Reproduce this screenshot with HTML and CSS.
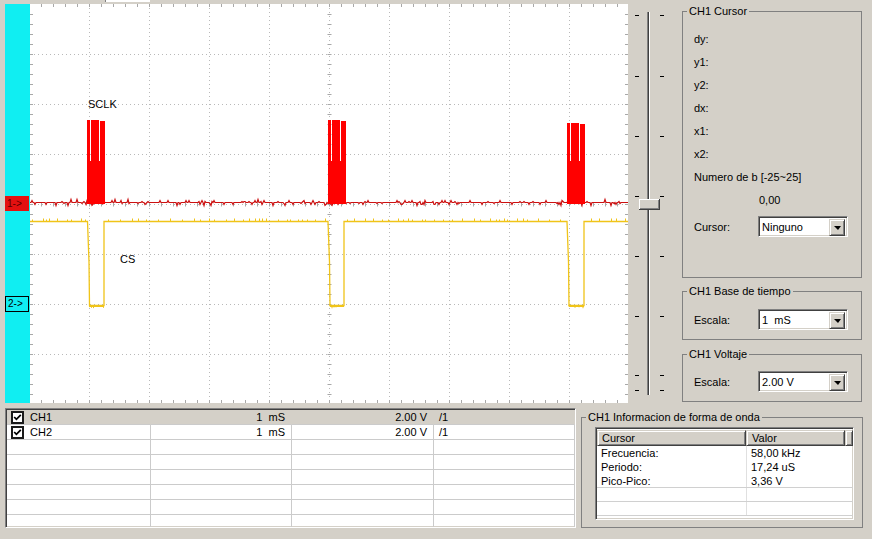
FILE: index.html
```html
<!DOCTYPE html>
<html lang="es">
<head>
    <meta charset="UTF-8">
    <title>Osciloscopio</title>
    <link rel="stylesheet" href="styles.css">
</head>
<body>

<div class="main">
    <div class="scope-col">
        <div class="top-strip"><div class="top-ctl"></div></div>
        <div class="scope">
            <div class="ch-bar">
                <div class="marker m1">1-&gt;</div>
                <div class="marker m2">2-&gt;</div>
            </div>
            <svg id="plot" class="plot" width="598" height="399" viewBox="0 0 598 399"></svg>
        </div>
    </div>

    <!-- trackbar -->
    <svg id="slider" class="slider" width="54" height="403" viewBox="0 0 54 403"></svg>

    <div class="side">
        <fieldset class="group cursor-group">
            <legend>CH1 Cursor</legend>
            <div class="group-body">
                <div class="row">dy:</div>
                <div class="row">y1:</div>
                <div class="row">y2:</div>
                <div class="row">dx:</div>
                <div class="row">x1:</div>
                <div class="row">x2:</div>
                <div class="row">Numero de b [-25~25]</div>
                <div class="row value">0,00</div>
                <div class="field">
                    <span class="label">Cursor:</span>
                    <div class="combo"><span class="combo-text">Ninguno</span><span class="combo-btn"></span></div>
                </div>
            </div>
        </fieldset>

        <fieldset class="group small-group time-group">
            <legend>CH1 Base de tiempo</legend>
            <div class="field">
                <span class="label">Escala:</span>
                <div class="combo"><span class="combo-text">1&nbsp; mS</span><span class="combo-btn"></span></div>
            </div>
        </fieldset>

        <fieldset class="group small-group volt-group">
            <legend>CH1 Voltaje</legend>
            <div class="field">
                <span class="label">Escala:</span>
                <div class="combo"><span class="combo-text">2.00 V</span><span class="combo-btn"></span></div>
            </div>
        </fieldset>
    </div>
</div>

<div class="bottom">
    <div class="chan-list">
        <div class="chan-row sel">
            <div class="cell c-ch"><span class="check"><svg width="9" height="9" viewBox="0 0 9 9"><polyline points="1.2,4 3.4,6.3 7.8,1.8" fill="none" stroke="#000" stroke-width="1.8"/></svg></span>CH1</div>
            <div class="cell num">1  mS</div>
            <div class="cell num">2.00 V</div>
            <div class="cell">/1</div>
        </div>
        <div class="chan-row">
            <div class="cell c-ch"><span class="check"><svg width="9" height="9" viewBox="0 0 9 9"><polyline points="1.2,4 3.4,6.3 7.8,1.8" fill="none" stroke="#000" stroke-width="1.8"/></svg></span>CH2</div>
            <div class="cell num">1  mS</div>
            <div class="cell num">2.00 V</div>
            <div class="cell">/1</div>
        </div>
        <div class="chan-row"><div class="cell c-ch"></div><div class="cell"></div><div class="cell"></div><div class="cell"></div></div>
        <div class="chan-row"><div class="cell c-ch"></div><div class="cell"></div><div class="cell"></div><div class="cell"></div></div>
        <div class="chan-row"><div class="cell c-ch"></div><div class="cell"></div><div class="cell"></div><div class="cell"></div></div>
        <div class="chan-row"><div class="cell c-ch"></div><div class="cell"></div><div class="cell"></div><div class="cell"></div></div>
        <div class="chan-row"><div class="cell c-ch"></div><div class="cell"></div><div class="cell"></div><div class="cell"></div></div>
        <div class="chan-row"><div class="cell c-ch"></div><div class="cell"></div><div class="cell"></div><div class="cell"></div></div>
    </div>

    <fieldset class="group info-group">
        <legend>CH1 Informacion de forma de onda</legend>
        <div class="wave-list">
            <div class="lv-head">
                <div class="hd c-name">Cursor</div>
                <div class="hd c-val">Valor</div>
                <div class="hd c-fill"></div>
            </div>
            <div class="lv-row"><div class="c-name">Frecuencia:</div><div class="c-val">58,00 kHz</div></div>
            <div class="lv-row"><div class="c-name">Periodo:</div><div class="c-val">17,24 uS</div></div>
            <div class="lv-row line"><div class="c-name">Pico-Pico:</div><div class="c-val">3,36 V</div></div>
            <div class="lv-row line"><div class="c-name"></div><div class="c-val"></div></div>
            <div class="lv-row line"><div class="c-name"></div><div class="c-val"></div></div>
        </div>
    </fieldset>
</div>

<script>
    // Simple seeded random so the noise is the same every time
    let seed = 12345;
    function rnd() {
        seed = (seed * 16807) % 2147483647;
        return seed / 2147483647;
    }

    const NS = 'http://www.w3.org/2000/svg';

    function add(svg, tag, attrs) {
        const el = document.createElementNS(NS, tag);
        for (const k in attrs) el.setAttribute(k, attrs[k]);
        svg.appendChild(el);
        return el;
    }

    // ---- plot ----
    const plot = document.getElementById('plot');
    const W = 598, H = 399;

    add(plot, 'rect', { width: W, height: H, fill: '#fff' });

    // dotted grid
    let grid = '';
    for (let i = 0; i < 9; i++) grid += `M${59.5 + i * 60} 0V${H}`;
    for (let i = 0; i < 7; i++) grid += `M0 ${50.5 + i * 50}H${W}`;
    add(plot, 'path', { d: grid, stroke: '#b9b9b9', 'stroke-dasharray': '1 3', fill: 'none' });

    // ticks on the edges and the centre axes
    let ticks = '';
    for (let x = 12; x < W; x += 12) {
        ticks += `M${x - 0.5} 0v3M${x - 0.5} ${H - 3}v3M${x - 0.5} 198.5v4`;
    }
    for (let y = 10; y < H; y += 10) {
        ticks += `M0 ${y + 0.5}h3M${W - 3} ${y + 0.5}h3M297.5 ${y + 0.5}h4`;
    }
    add(plot, 'path', { d: ticks, stroke: '#a8a8a8', fill: 'none' });

    // CH2 (yellow)
    const dips = [[57.5, 74], [298, 314], [537, 554]];
    let yd = 'M0 217.5';
    dips.forEach(([a, b]) => {
        yd += `H${a}L${a + 1.5} 258L${a + 2} 301.5H${b}V217.5`;
    });
    yd += `H${W}`;
    add(plot, 'path', { d: yd, stroke: '#f0c419', 'stroke-width': 1.3, fill: 'none' });

    let yn = '';
    for (let x = 2; x < W; x += 3 + Math.floor(rnd() * 10)) {
        if (dips.some(([a, b]) => x > a - 2 && x < b + 2)) continue;
        yn += `M${x + 0.5} 217.5v-${2 + Math.floor(rnd() * 2)}`;
    }
    dips.forEach(([a, b]) => {
        for (let x = a + 2; x < b; x += 2) yn += `M${x} 301v${1 + rnd() * 2.5}`;
        yn += `M${a + 2} 302.5H${b}`;
    });
    add(plot, 'path', { d: yn, stroke: '#f0c419', 'stroke-width': 1, fill: 'none' });

    // CH1 (red)
    const bursts = [[57, 116], [298, 116], [537, 119]];
    let rd = 'M0 198.5';
    for (let x = 1; x <= W; x++) {
        let y = 198.5;
        if (rnd() < 0.3) y += Math.round(rnd() * 6 - 3);
        rd += `L${x} ${y}`;
    }
    add(plot, 'path', { d: rd, stroke: '#cc1010', 'stroke-width': 1.2, fill: 'none' });

    bursts.forEach(([x, top]) => {
        add(plot, 'rect', { x: x, y: 157, width: 18, height: 43, fill: '#f00' });
        add(plot, 'rect', { x: x, y: top, width: 3, height: 157 - top, fill: '#f00' });
        add(plot, 'rect', { x: x + 4, y: top, width: 8, height: 157 - top, fill: '#f00' });
        add(plot, 'rect', { x: x + 13, y: top + 1, width: 5, height: 156 - top, fill: '#f00' });
    });

    const t1 = add(plot, 'text', { x: 58, y: 104, class: 'plot-label' });
    t1.textContent = 'SCLK';
    const t2 = add(plot, 'text', { x: 90, y: 259, class: 'plot-label' });
    t2.textContent = 'CS';

    // ---- trackbar ----
    const slider = document.getElementById('slider');
    [15, 76, 136, 196, 256, 316, 375, 390].forEach(y => {
        add(slider, 'rect', { x: 7, y: y, width: 4, height: 1, fill: '#000' });
        add(slider, 'rect', { x: 32, y: y, width: 4, height: 1, fill: '#000' });
    });
    add(slider, 'rect', { x: 19, y: 12, width: 1, height: 383, fill: '#808080' });
    add(slider, 'rect', { x: 20, y: 12, width: 1, height: 383, fill: '#404040' });
    add(slider, 'rect', { x: 21, y: 12, width: 1, height: 383, fill: '#fff' });
    add(slider, 'rect', { x: 11, y: 199, width: 21, height: 11, fill: '#404040' });
    add(slider, 'rect', { x: 11, y: 199, width: 20, height: 10, fill: '#fff' });
    add(slider, 'rect', { x: 12, y: 200, width: 19, height: 9, fill: '#808080' });
    add(slider, 'rect', { x: 12, y: 200, width: 18, height: 8, fill: '#d4d0c8' });
</script>

</body>
</html>
```

FILE: styles.css
```css
body {
    margin: 0;
    width: 872px;
    height: 539px;
    overflow: hidden;
    background-color: #d4d0c8;
    font-family: "Liberation Sans", Arial, sans-serif;
    font-size: 11px;
    color: #000;
}

.main {
    display: flex;
    align-items: flex-start;
}

/* scope display */

.scope-col {
    padding-left: 5px;
}

.top-strip {
    height: 4px;
}

.top-ctl {
    margin-left: 100px;
    width: 44px;
    height: 2px;
    background-color: #fff;
    border-left: 1px solid #808080;
}

.scope {
    display: flex;
    height: 399px;
}

.ch-bar {
    position: relative;
    width: 25px;
    background-color: #10eef2;
}

.marker {
    position: absolute;
    left: 0;
    width: 24px;
    box-sizing: border-box;
    padding-left: 2px;
    font-size: 10px;
}

.marker.m1 {
    top: 192px;
    height: 15px;
    line-height: 15px;
    background-color: #e41010;
    color: #5a0000;
}

.marker.m2 {
    top: 292px;
    height: 16px;
    line-height: 14px;
    border: 1px solid #000;
}

.plot {
    display: block;
}

.plot-label {
    font-family: "Liberation Sans", Arial, sans-serif;
    font-size: 11px;
    fill: #000;
}

.slider {
    display: block;
}

/* right side panel */

.side {
    width: 180px;
}

.group {
    margin: 0;
    padding: 0;
    border: 1px solid #808080;
    min-width: 0;
}

.group legend {
    margin-left: 4px;
    padding: 0 2px;
    line-height: 13px;
}

.cursor-group {
    margin-top: 5px;
}

.group-body {
    padding: 10px 0 40px 11px;
}

.row {
    height: 23px;
    line-height: 23px;
}

.row.value {
    padding-left: 65px;
}

.field {
    display: flex;
    align-items: center;
    height: 21px;
}

.group-body .field {
    margin-top: 4px;
}

.label {
    width: 64px;
}

.small-group {
    padding: 11px 0 9px 0;
}

.small-group .field {
    margin-left: 11px;
}

.time-group {
    margin-top: 7px;
}

.volt-group {
    margin-top: 8px;
    padding-top: 10px;
}

.combo {
    display: flex;
    width: 90px;
    height: 21px;
    box-sizing: border-box;
    padding: 2px;
    border: 1px solid;
    border-color: #808080 #fff #fff #808080;
    box-shadow: inset 1px 1px 0 #404040, inset -1px -1px 0 #d4d0c8;
    background-color: #fff;
}

.combo-text {
    flex: 1;
    line-height: 17px;
    padding-left: 1px;
    white-space: pre;
}

.combo-btn {
    display: flex;
    align-items: center;
    justify-content: center;
    width: 16px;
    height: 17px;
    box-sizing: border-box;
    border: 1px solid;
    border-color: #d4d0c8 #404040 #404040 #d4d0c8;
    box-shadow: inset 1px 1px 0 #fff, inset -1px -1px 0 #808080;
    background-color: #d4d0c8;
}

.combo-btn::after {
    content: "";
    border-left: 4px solid transparent;
    border-right: 3px solid transparent;
    border-top: 4px solid #000;
    margin-top: 1px;
}

/* bottom area */

.bottom {
    display: flex;
    align-items: flex-start;
    margin-top: 5px;
}

.chan-list {
    margin-left: 5px;
    width: 571px;
    height: 120px;
    box-sizing: border-box;
    padding-top: 1px;
    overflow: hidden;
    border: 1px solid;
    border-color: #808080 #fff #fff #808080;
    box-shadow: inset 1px 1px 0 #404040, inset -1px -1px 0 #d4d0c8;
    background-color: #fff;
}

.chan-row {
    display: grid;
    grid-template-columns: 144px 141px 142px 1fr;
    height: 15px;
    margin-left: 1px;
}

.chan-row .cell {
    box-sizing: border-box;
    height: 15px;
    line-height: 14px;
    border-bottom: 1px solid #cbcbcb;
    border-right: 1px solid #cbcbcb;
    padding-left: 5px;
    white-space: pre;
}

.chan-row.sel {
    background-color: #d4d0c8;
}

.chan-row.sel .cell {
    border-right-color: transparent;
}

.chan-row .num {
    text-align: right;
    padding-right: 6px;
}

.chan-row .c-ch {
    display: flex;
    align-items: center;
    padding-left: 4px;
}

.check {
    display: flex;
    align-items: center;
    justify-content: center;
    width: 13px;
    height: 13px;
    box-sizing: border-box;
    margin-right: 6px;
    border: 2px solid #1a1a1a;
    background-color: #fff;
}

.check svg {
    display: block;
}

.info-group {
    margin: 3px 0 0 5px;
    width: 282px;
    box-sizing: border-box;
    padding: 3px 0 7px 0;
}

.wave-list {
    width: 259px;
    height: 93px;
    margin-left: 13px;
    box-sizing: border-box;
    padding: 2px 0 0 1px;
    overflow: hidden;
    border: 1px solid;
    border-color: #808080 #fff #fff #808080;
    box-shadow: inset 1px 1px 0 #404040, inset -1px -1px 0 #d4d0c8;
    background-color: #fff;
}

.lv-head {
    display: flex;
    height: 16px;
}

.hd {
    box-sizing: border-box;
    height: 16px;
    line-height: 15px;
    border: 1px solid;
    border-color: #d4d0c8 #404040 #404040 #d4d0c8;
    box-shadow: inset 1px 1px 0 #fff, inset -1px -1px 0 #808080;
    background-color: #d4d0c8;
}

.c-name {
    width: 149px;
    padding-left: 4px;
    box-sizing: border-box;
}

.c-val {
    width: 99px;
    padding-left: 5px;
    box-sizing: border-box;
}

.c-fill {
    flex: 1;
}

.lv-row {
    display: flex;
    height: 14px;
    line-height: 14px;
}

.lv-row .c-val {
    border-left: 1px solid #e0e0e0;
    padding-left: 4px;
}

.lv-row.line {
    box-sizing: border-box;
    border-bottom: 1px solid #d0d0d0;
}
```
